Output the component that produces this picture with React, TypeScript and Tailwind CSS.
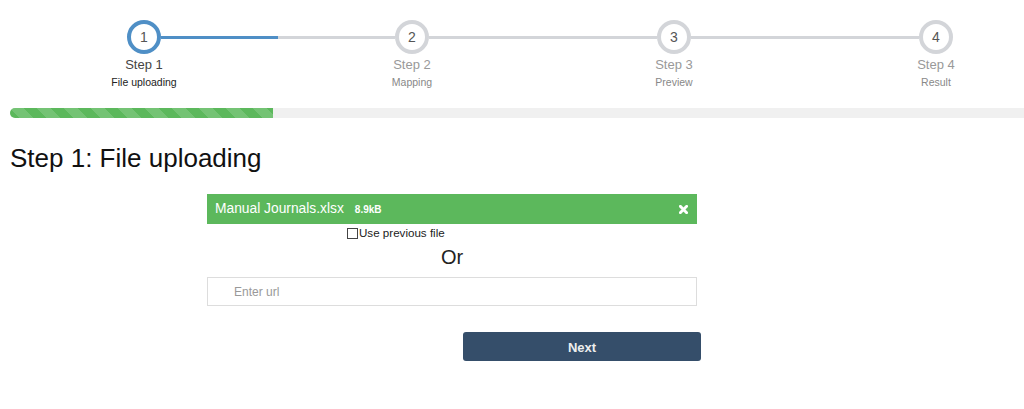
import React from "react";

const steps = [
  { n: 1, title: "Step 1", sub: "File uploading", active: true },
  { n: 2, title: "Step 2", sub: "Mapping", active: false },
  { n: 3, title: "Step 3", sub: "Preview", active: false },
  { n: 4, title: "Step 4", sub: "Result", active: false },
];

function Circle({ n, active }: { n: number; active: boolean }) {
  return (
    <div
      className={`w-[34px] h-[34px] rounded-full border-[4px] bg-white flex items-center justify-center text-[14px] text-[#555] ${
        active ? "border-[#4f8fc6]" : "border-[#d3d5d9]"
      }`}
    >
      {n}
    </div>
  );
}

function Line({ fill }: { fill: number }) {
  return (
    <div className="h-[3px] bg-[#d3d5d9] flex">
      {fill > 0 ? <div className="h-full bg-[#4f8fc6]" style={{ width: `${fill}%` }} /> : null}
    </div>
  );
}

export default function App() {
  return (
    <div className="w-[1024px] h-[409px] bg-white overflow-hidden font-['Liberation_Sans',Arial,sans-serif] text-[#222]">
      {/* stepper */}
      <div className="pt-[20px] pl-[127px]">
        <div className="grid grid-cols-[34px_234px_34px_228px_34px_228px_34px] items-center">
          <Circle n={1} active />
          <Line fill={50} />
          <Circle n={2} active={false} />
          <Line fill={0} />
          <Circle n={3} active={false} />
          <Line fill={0} />
          <Circle n={4} active={false} />
          {steps.map((s, i) => (
            <div
              key={s.n}
              className={`mt-[3px] flex flex-col items-center whitespace-nowrap ${
                i === 0 ? "col-start-1" : i === 1 ? "col-start-3" : i === 2 ? "col-start-5" : "col-start-7"
              }`}
            >
              <div className={`text-[13px] leading-[16px] ${s.active ? "text-[#444]" : "text-[#999]"}`}>{s.title}</div>
              <div className={`mt-[2px] text-[10.5px] leading-[14px] ${s.active ? "text-[#222]" : "text-[#888]"}`}>{s.sub}</div>
            </div>
          ))}
        </div>
      </div>

      {/* progress */}
      <div className="mt-[19px] ml-[10px] h-[10px] bg-[#f0f0f0] rounded-l-[5px] overflow-hidden">
        <div className="h-full w-[263px] bg-[#5cb85c] bg-[linear-gradient(45deg,rgba(255,255,255,.15)_25%,transparent_25%,transparent_50%,rgba(255,255,255,.15)_50%,rgba(255,255,255,.15)_75%,transparent_75%,transparent)] bg-size-[27px_27px]" />
      </div>

      {/* heading */}
      <h1 className="mt-[25px] ml-[10px] text-[26px] leading-[30px] text-[#111]">Step 1: File uploading</h1>

      {/* file bar */}
      <div className="mt-[21px] ml-[207px] w-[490px] h-[30px] bg-[#5cb85c] flex items-center pl-[8px] pr-[9px] text-white">
        <span className="text-[13.8px]">Manual Journals.xlsx</span>
        <span className="ml-[11px] text-[10px] font-bold">8.9kB</span>
        <svg className="ml-auto" width="9" height="9" viewBox="0 0 10 10">
          <path d="M1.5 1.5 L8.5 8.5 M8.5 1.5 L1.5 8.5" stroke="white" strokeWidth="3.2" strokeLinecap="square" />
        </svg>
      </div>

      {/* checkbox */}
      <label className="mt-[1px] ml-[347px] flex items-center h-[16px] text-[11.6px] text-[#222]">
        <input type="checkbox" className="appearance-none w-[11px] h-[11px] border border-[#444] bg-white m-0" />
        <span className="ml-[1px]">Use previous file</span>
      </label>

      {/* Or */}
      <div className="mt-[4px] ml-[207px] w-[490px] text-center text-[20px] leading-[24px] text-[#222]">Or</div>

      {/* url input */}
      <input
        type="text"
        placeholder="Enter url"
        className="block mt-[8px] ml-[207px] w-[490px] h-[29px] border border-[#dddddd] pl-[26px] text-[12px] text-[#333] placeholder:text-[#999] outline-none"
      />

      {/* next */}
      <button className="block mt-[26px] ml-[463px] w-[238px] h-[29px] pt-[2px] rounded-[3px] bg-[#354e6a] text-[#eeeeee] text-[13px] font-bold">
        Next
      </button>
    </div>
  );
}
